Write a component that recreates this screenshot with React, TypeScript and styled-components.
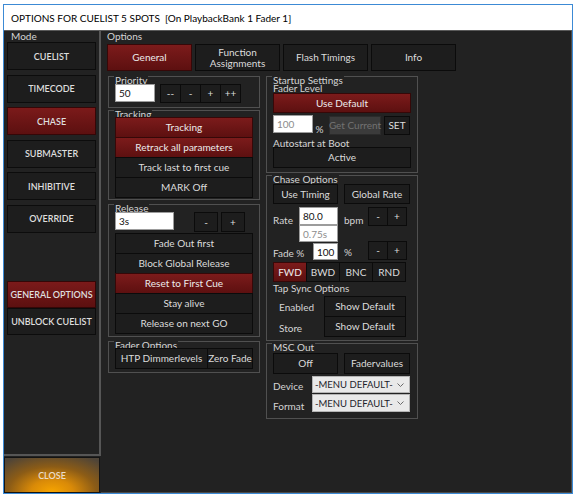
import React from "react";
import styled, { createGlobalStyle, css } from "styled-components";

const GlobalStyle = createGlobalStyle`
  html, body { margin: 0; padding: 0; background: #ffffff; }
  body { font-family: Lato, "Liberation Sans", sans-serif; }
  *, *::before, *::after { box-sizing: border-box; }
`;

const Window = styled.div`
  margin: 4px 0 0 3px;
  width: 570px;
  height: 490px;
  border: 1px solid #3c8ad5;
  display: flex;
  flex-direction: column;
  background: #ffffff;
`;

const TitleBar = styled.div`
  height: 25px;
  flex: none;
  display: flex;
  align-items: center;
  padding-left: 7px;
  font-size: 10px;
  color: #000;
  white-space: pre;
`;

const Body = styled.div`
  flex: 1;
  display: flex;
  min-height: 0;
  background: #222222;
  border-top: 1px solid #5a5a5a;
`;

const ModeColumn = styled.div`
  width: 97px;
  flex: none;
  display: flex;
  flex-direction: column;
`;

const ModeBox = styled.div`
  flex: 1;
  display: flex;
  flex-direction: column;
  padding: 0 3px;
  border-right: 2px solid #565656;
  border-bottom: 2px solid #565656;
`;

const PanelTitle = styled.div<{ $ml: number }>`
  font-size: 10px;
  line-height: 10px;
  height: 10px;
  color: #d4d4d4;
  margin-left: ${(p) => p.$ml}px;
`;

const ModeList = styled.div`
  display: flex;
  flex-direction: column;
  gap: 4.5px;
  margin-top: 1px;
`;

const ModeExtra = styled.div`
  display: flex;
  flex-direction: column;
  margin-top: 48.5px;
`;

const ModeButton = styled.div<{ $active?: boolean; $h?: number }>`
  height: ${(p) => p.$h ?? 28}px;
  display: flex;
  align-items: center;
  justify-content: center;
  border: 1px solid #0c0c0c;
  background: #1d1d1d;
  color: #dedede;
  font-size: 9px;
  font-weight: 600;
  white-space: nowrap;
  ${(p) =>
    p.$active &&
    css`
      background: linear-gradient(180deg, #7b1a1a 0%, #5c1010 100%);
      border-color: #340707;
    `}
`;

const CloseButton = styled.div`
  height: 36px;
  margin: 1px 1px 0 0;
  display: flex;
  align-items: center;
  justify-content: center;
  border: 1px solid #141414;
  background: radial-gradient(
    ellipse 75% 120% at 50% 100%,
    #f7a500 0%,
    #d98a08 30%,
    #8c5c16 62%,
    #4e4438 100%
  );
  color: #eadccb;
  font-size: 9px;
  font-weight: 600;
`;

const OptionsPanel = styled.div`
  flex: 1;
  display: flex;
  flex-direction: column;
  padding-left: 6px;
  border-right: 1px solid #4a4a4a;
  border-bottom: 1px solid #4a4a4a;
`;

const TabRow = styled.div`
  display: flex;
  gap: 3px;
  margin-top: 3px;
`;

const Button = styled.div<{ $w?: number; $h?: number; $tone?: "dark" | "red" | "off"; $ml?: number; $mt?: number }>`
  flex: none;
  width: ${(p) => (p.$w ? `${p.$w}px` : "auto")};
  height: ${(p) => p.$h ?? 20}px;
  margin-left: ${(p) => p.$ml ?? 0}px;
  margin-top: ${(p) => p.$mt ?? 0}px;
  display: flex;
  align-items: center;
  justify-content: center;
  text-align: center;
  line-height: 11px;
  border: 1px solid #0b0b0b;
  background: #1d1d1d;
  color: #dcdcdc;
  font-size: 10px;
  white-space: nowrap;
  ${(p) =>
    p.$tone === "red" &&
    css`
      background: linear-gradient(180deg, #7c1b1b 0%, #5d1010 100%);
      border-color: #360808;
      color: #ececec;
    `}
  ${(p) =>
    p.$tone === "off" &&
    css`
      background: #3b3b3b;
      border-color: #2b2b2b;
      color: #727272;
    `}
`;

const Columns = styled.div`
  display: flex;
  gap: 6px;
  margin: 5px 0 0 1px;
  align-items: flex-start;
`;

const Column = styled.div`
  width: 152px;
  display: flex;
  flex-direction: column;
`;

const Group = styled.div<{ $h: number; $mt?: number }>`
  height: ${(p) => p.$h}px;
  margin-top: ${(p) => p.$mt ?? 0}px;
  border: 1px solid #505050;
  padding: 0 6px;
  display: flex;
  flex-direction: column;
`;

const Legend = styled.div<{ $h?: number }>`
  align-self: flex-start;
  font-size: 10px;
  line-height: 10px;
  height: ${(p) => p.$h ?? 10}px;
  color: #d4d4d4;
  background: #222222;
  padding: 0 1px;
  margin: -2px 0 0 -1px;
  white-space: nowrap;
`;

const Caption = styled.div<{ $mt?: number; $ml?: number; $w?: number }>`
  flex: none;
  font-size: 10px;
  line-height: 10px;
  height: 10px;
  color: #d4d4d4;
  white-space: nowrap;
  margin-top: ${(p) => p.$mt ?? 0}px;
  margin-left: ${(p) => p.$ml ?? 0}px;
  width: ${(p) => (p.$w ? `${p.$w}px` : "auto")};
`;

const Row = styled.div<{ $mt?: number }>`
  display: flex;
  align-items: flex-start;
  margin-top: ${(p) => p.$mt ?? 0}px;
`;

const Stack = styled.div<{ $mt?: number }>`
  display: flex;
  flex-direction: column;
  margin-top: ${(p) => p.$mt ?? 0}px;
  & > * + * {
    margin-top: -1px;
  }
`;

const Joined = styled.div<{ $ml?: number; $mr?: number }>`
  display: flex;
  margin-left: ${(p) => p.$ml ?? 0}px;
  margin-right: ${(p) => p.$mr ?? 0}px;
  & > * + * {
    margin-left: -1px;
  }
`;

const Field = styled.div<{ $w: number; $h?: number; $muted?: boolean; $mt?: number; $ml?: number }>`
  flex: none;
  width: ${(p) => p.$w}px;
  height: ${(p) => p.$h ?? 18}px;
  margin-top: ${(p) => p.$mt ?? 0}px;
  margin-left: ${(p) => p.$ml ?? 0}px;
  background: #ffffff;
  border: 1px solid #9c9c9c;
  color: ${(p) => (p.$muted ? "#8c8c8c" : "#111111")};
  font-size: 10px;
  padding-left: 3px;
  display: flex;
  align-items: center;
`;

const FieldStack = styled.div`
  display: flex;
  flex-direction: column;
`;

const Select = styled.div<{ $h: number }>`
  flex: none;
  width: 98px;
  height: ${(p) => p.$h}px;
  background: #e9e9e9;
  border: 1px solid #b4b4b4;
  display: flex;
  align-items: center;
  justify-content: space-between;
  padding: 0 5px 0 2px;
  color: #1c1c2a;
  font-size: 9.5px;
  white-space: nowrap;
`;

const Chevron = () => (
  <svg width="7" height="4" viewBox="0 0 7 4">
    <polyline points="0.5,0.5 3.5,3.5 6.5,0.5" fill="none" stroke="#6a6a6a" strokeWidth="1" />
  </svg>
);

const Spin = ({ labels, w = 20, h = 20, ml = 0, mr = 0 }: { labels: string[]; w?: number; h?: number; ml?: number; mr?: number }) => (
  <Joined $ml={ml} $mr={mr}>
    {labels.map((l) => (
      <Button key={l} $w={w} $h={h}>
        {l}
      </Button>
    ))}
  </Joined>
);

export default function App() {
  return (
    <>
      <GlobalStyle />
      <Window>
        <TitleBar>{"OPTIONS FOR CUELIST 5 SPOTS  [On PlaybackBank 1 Fader 1]"}</TitleBar>
        <Body>
          <ModeColumn>
            <ModeBox>
              <PanelTitle $ml={4}>Mode</PanelTitle>
              <ModeList>
                <ModeButton>CUELIST</ModeButton>
                <ModeButton>TIMECODE</ModeButton>
                <ModeButton $active>CHASE</ModeButton>
                <ModeButton>SUBMASTER</ModeButton>
                <ModeButton>INHIBITIVE</ModeButton>
                <ModeButton>OVERRIDE</ModeButton>
              </ModeList>
              <ModeExtra>
                <ModeButton $active $h={27}>GENERAL OPTIONS</ModeButton>
                <ModeButton $h={27}>UNBLOCK CUELIST</ModeButton>
              </ModeExtra>
            </ModeBox>
            <CloseButton>CLOSE</CloseButton>
          </ModeColumn>

          <OptionsPanel>
            <PanelTitle $ml={0}>Options</PanelTitle>
            <TabRow>
              <Button $w={85} $h={27} $tone="red">General</Button>
              <Button $w={85} $h={27}>
                Function
                <br />
                Assignments
              </Button>
              <Button $w={85} $h={27}>Flash Timings</Button>
              <Button $w={85} $h={27}>Info</Button>
            </TabRow>

            <Columns>
              <Column>
                <Group $h={32}>
                  <Legend>Priority</Legend>
                  <Row $mt={-1}>
                    <Field $w={40}>50</Field>
                    <Spin labels={["--", "-", "+", "++"]} w={21} h={19} ml={5} />
                  </Row>
                </Group>

                <Group $h={90} $mt={2}>
                  <Legend>Tracking</Legend>
                  <Stack $mt={-2}>
                    <Button $h={21} $tone="red">Tracking</Button>
                    <Button $h={21} $tone="red">Retrack all parameters</Button>
                    <Button $h={21}>Track last to first cue</Button>
                    <Button $h={21}>MARK Off</Button>
                  </Stack>
                </Group>

                <Group $h={133} $mt={4}>
                  <Legend>Release</Legend>
                  <Row $mt={-1}>
                    <Field $w={59}>3s</Field>
                    <Button $w={24} $ml={20}>-</Button>
                    <Button $w={24} $ml={3}>+</Button>
                  </Row>
                  <Stack $mt={1}>
                    <Button $h={21}>Fade Out first</Button>
                    <Button $h={21}>Block Global Release</Button>
                    <Button $h={21} $tone="red">Reset to First Cue</Button>
                    <Button $h={21}>Stay alive</Button>
                    <Button $h={21}>Release on next GO</Button>
                  </Stack>
                </Group>

                <Group $h={32} $mt={4}>
                  <Legend>Fader Options</Legend>
                  <Row $mt={-2}>
                    <Joined>
                      <Button $w={93} $h={21}>HTP Dimmerlevels</Button>
                      <Button $w={46} $h={21}>Zero Fade</Button>
                    </Joined>
                  </Row>
                </Group>
              </Column>

              <Column>
                <Group $h={97}>
                  <Legend $h={9}>Startup Settings</Legend>
                  <Caption $mt={-1}>Fader Level</Caption>
                  <Button $h={20} $mt={0} $tone="red">Use Default</Button>
                  <Row $mt={2}>
                    <Field $w={40} $muted>100</Field>
                    <Caption $w={16} $ml={0} $mt={9}>&nbsp;%</Caption>
                    <Button $w={52} $h={19} $mt={1} $tone="off">Get Current</Button>
                    <Button $w={26} $h={19} $mt={1} $ml={3}>SET</Button>
                  </Row>
                  <Caption $mt={3}>Autostart at Boot</Caption>
                  <Button $h={21} $mt={-1}>Active</Button>
                </Group>

                <Group $h={166} $mt={2}>
                  <Legend>Chase Options</Legend>
                  <Row>
                    <Button $w={65}>Use Timing</Button>
                    <Button $w={66} $ml={6}>Global Rate</Button>
                  </Row>
                  <Row $mt={3}>
                    <Caption $w={26} $mt={8}>Rate</Caption>
                    <FieldStack>
                      <Field $w={39}>80.0</Field>
                      <Field $w={39} $h={17} $muted>0.75s</Field>
                    </FieldStack>
                    <Caption $w={24} $ml={6} $mt={8}>bpm</Caption>
                    <Spin labels={["-", "+"]} w={20} h={19} />
                  </Row>
                  <Row $mt={-1}>
                    <Caption $w={40} $mt={7}>Fade %</Caption>
                    <Field $w={25} $h={17} $mt={2}>100</Field>
                    <Caption $w={24} $ml={6} $mt={6}>%</Caption>
                    <Spin labels={["-", "+"]} w={20} h={19} />
                  </Row>
                  <Row $mt={2}>
                    <Joined>
                      <Button $w={34} $tone="red">FWD</Button>
                      <Button $w={34}>BWD</Button>
                      <Button $w={34}>BNC</Button>
                      <Button $w={34}>RND</Button>
                    </Joined>
                  </Row>
                  <Caption $mt={1}>Tap Sync Options</Caption>
                  <Row $mt={3}>
                    <Caption $w={45} $ml={6} $mt={6}>Enabled</Caption>
                    <Button $w={82} $h={21}>Show Default</Button>
                  </Row>
                  <Row $mt={-1}>
                    <Caption $w={45} $ml={6} $mt={7}>Store</Caption>
                    <Button $w={82} $h={21}>Show Default</Button>
                  </Row>
                </Group>

                <Group $h={76} $mt={2}>
                  <Legend>MSC Out</Legend>
                  <Row $mt={1}>
                    <Button $w={65} $h={21}>Off</Button>
                    <Button $w={66} $h={21} $ml={6}>Fadervalues</Button>
                  </Row>
                  <Row $mt={2}>
                    <Caption $w={39} $mt={5}>Device</Caption>
                    <Select $h={17}>
                      -MENU DEFAULT-
                      <Chevron />
                    </Select>
                  </Row>
                  <Row $mt={1}>
                    <Caption $w={39} $mt={7}>Format</Caption>
                    <Select $h={18}>
                      -MENU DEFAULT-
                      <Chevron />
                    </Select>
                  </Row>
                </Group>
              </Column>
            </Columns>
          </OptionsPanel>
        </Body>
      </Window>
    </>
  );
}
